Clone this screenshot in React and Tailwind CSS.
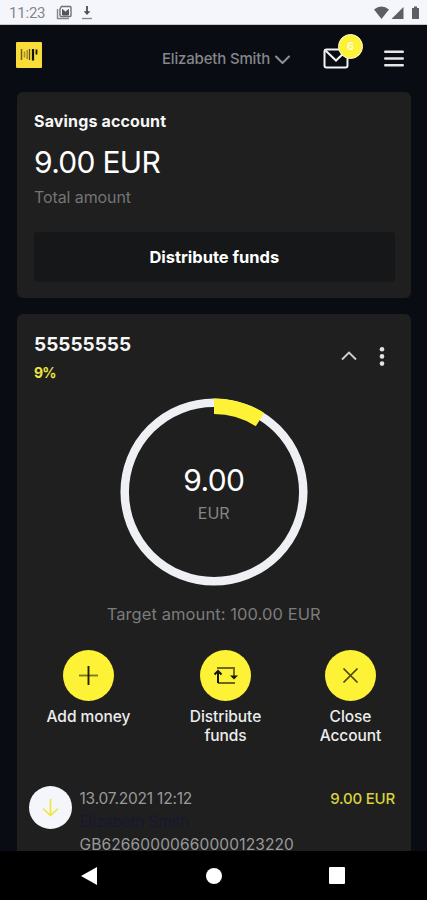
function StatusBar() {
  return (
    <div className="flex h-[25px] shrink-0 items-center border-b border-[#c9cace] bg-[#f4f6fc] pl-[9px] pr-[7px] text-[#85868a]">
      <span className="mt-[2px] w-[47px] font-[Roboto] text-[15px] leading-[25px] tracking-[-0.2px] whitespace-nowrap">11:23</span>
      <svg className="mt-px" width="17" height="15" viewBox="0 0 17 15" fill="none">
        <path d="M1.5 4v9.5h11.5" stroke="#85868a" strokeWidth="1.4" />
        <path d="M5.5 1.5h8.5q1 0 1 1v8q0 1-1 1h-8.5q-1.500 0-1.500-1v-6.500z" stroke="#707175" strokeWidth="1.4" />
        <path d="M6.500 10V4.500L9.500 7l3-2.500V10z" fill="#55565a" stroke="#55565a" />
      </svg>
      <svg className="ml-[8px] mt-px" width="12" height="15" viewBox="0 0 12 15" fill="none">
        <path d="M6 1v8" stroke="#4b4c50" strokeWidth="1.800" />
        <path d="M2.700 6.300h6.600L6 10z" fill="#4b4c50" />
        <path d="M1 13.500h10" stroke="#85868a" strokeWidth="1.300" />
      </svg>
      <svg className="ml-auto mt-[2px]" width="46" height="14" viewBox="0 0 46 14" fill="#5d5e62">
        <path d="M0 3.500Q7.500-2.500 15 3.500L7.500 13z" />
        <path d="M29.500 1v12h-12z" />
        <path d="M38 2h2V.5h3V2h2v11h-7z" />
      </svg>
    </div>
  );
}

function Header() {
  return (
    <header className="flex h-[67px] shrink-0 items-start pl-4">
      <svg className="mt-[17px]" width="26" height="26" viewBox="0 0 26 26" fill="none">
        <rect width="26" height="26" rx="1" fill="#f9dc38" />
        <path d="M5.500 7v11" stroke="#6e5d1c" strokeWidth="1.500" />
        <path d="M8.500 9.500v6M11.200 8v9" stroke="#a58c26" strokeWidth="1.500" />
        <path d="M13.500 7v11" stroke="#5c4d18" strokeWidth="1.300" />
        <path d="M17 7v11.500" stroke="#14120c" strokeWidth="2.200" />
        <path d="M20.500 7.500v5" stroke="#14120c" strokeWidth="1.800" />
      </svg>
      <span className="ml-[120px] mt-[22px] w-[113px] text-[15px] font-medium leading-6 tracking-[-0.18px] whitespace-nowrap text-[#858689]">
        Elizabeth Smith
      </span>
      <svg className="mt-[30px]" width="15" height="10" viewBox="0 0 15 10" fill="none" stroke="#909194" strokeWidth="2" strokeLinecap="round" strokeLinejoin="round">
        <path d="M1 1.500l6.500 6.500L14 1.500" />
      </svg>
      <div className="relative ml-[33px] mt-[23px]">
        <svg width="26" height="21" viewBox="0 0 26 21" fill="none" stroke="#f4f4f6" strokeWidth="2">
          <rect x="1.500" y="1.500" width="23" height="18" rx="2" />
          <path d="M2.500 2.500L13 12.500 23.500 2.500" />
        </svg>
        <span className="absolute left-[15px] top-[-14px] flex size-[25px] items-center justify-center rounded-full border border-[#fffce0] bg-[#fdf235] text-[11px] font-semibold text-[#fffef0]">
          6
        </span>
      </div>
      <svg className="ml-[35px] mt-[25px]" width="20" height="17" viewBox="0 0 20 17" stroke="#e6e6e9" strokeWidth="2.400" strokeLinecap="round">
        <path d="M1.200 1.800h17.600M1.200 8.500h17.600M1.200 15.200h17.600" />
      </svg>
    </header>
  );
}

function SavingsCard() {
  return (
    <section className="mr-4 ml-[16.500px] flex h-[206px] shrink-0 flex-col rounded-md bg-[#1f1f1f] pr-[16.500px] pl-[17.500px] pt-[17px]">
      <h2 className="text-[16px] font-bold leading-6 tracking-[0.15px] text-[#f7f7f7]">Savings account</h2>
      <p className="mt-[11px] text-[30px] leading-9 tracking-[-0.7px] text-white">9.00 EUR</p>
      <p className="mt-[5px] text-[16px] leading-6 tracking-[-0.1px] text-[#747474]">Total amount</p>
      <button className="mt-[23px] h-[50px] rounded bg-[#161718] text-[16.500px] font-bold tracking-[-0.02px] text-white">Distribute funds</button>
    </section>
  );
}

function ProgressRing() {
  return (
    <div className="mt-[13px] grid h-[190px] place-items-center">
      <svg className="col-start-1 row-start-1" width="190" height="190" viewBox="0 0 190 190" fill="none">
        <circle cx="95" cy="95" r="89.300" stroke="#eff0f4" strokeWidth="8.500" />
        <path d="M95 9.200A85.800 85.800 0 0 1 140.980 22.560" stroke="#fdf235" strokeWidth="15.600" />
      </svg>
      <div className="col-start-1 row-start-1 text-center">
        <p className="mt-[3px] text-[30px] leading-9 tracking-[-0.6px] text-white">9.00</p>
        <p className="mt-[3px] text-[16px] leading-6 text-[#858585]">EUR</p>
      </div>
    </div>
  );
}

function Action({ label, children }) {
  return (
    <div className="flex w-[90px] flex-col items-center">
      <span className="flex size-[51px] items-center justify-center rounded-full bg-[#fdf235]">{children}</span>
      <span className="mt-[6px] text-center text-[15.500px] font-medium leading-[19px] tracking-[-0.05px] text-[#ededed]">{label}</span>
    </div>
  );
}

function AccountCard() {
  return (
    <section className="mr-4 ml-[16.500px] mt-[16px] flex min-h-0 flex-1 flex-col overflow-hidden rounded-t-md bg-[#1f1f1f]">
      <div className="flex h-[70px] shrink-0 items-start pl-[17.500px] pr-[25px]">
        <div>
          <h2 className="mt-[19px] text-[19px] font-bold leading-6 text-[#f7f7f7]">55555555</h2>
          <p className="mt-[4px] text-[14px] font-bold leading-6 tracking-[-0.8px] text-[#ece442]">9%</p>
        </div>
        <svg className="ml-auto mt-[36px]" width="16" height="11" viewBox="0 0 16 11" fill="none" stroke="#cfcfcf" strokeWidth="1.900">
          <path d="M1 9.500L8 2.500l7 7" />
        </svg>
        <svg className="ml-[21px] mt-[32px]" width="8" height="20" viewBox="0 0 8 20" fill="#e2e2e2">
          <circle cx="4" cy="3.200" r="2.300" />
          <circle cx="4" cy="10.400" r="2.300" />
          <circle cx="4" cy="17.600" r="2.300" />
        </svg>
      </div>
      <ProgressRing />
      <p className="mt-[15px] text-center text-[16.500px] leading-6 tracking-[0.08px] text-[#7c7c7c]">Target amount: 100.00 EUR</p>
      <div className="mt-[24px] flex h-[113px] shrink-0 items-start pl-[27px]">
        <Action label="Add money">
          <svg width="19" height="19" viewBox="0 0 19 19" fill="none">
            <path d="M0 9.500h19" stroke="#807a20" strokeWidth="1.900" />
            <path d="M9.500 0v19" stroke="#22210c" strokeWidth="1.900" />
          </svg>
        </Action>
        <div className="ml-[47px]">
          <Action label="Distribute funds">
            <svg width="26" height="19" viewBox="0 0 26 19" fill="none">
              <path d="M4 2h17v9M22 17H5" stroke="#6d6819" strokeWidth="1.900" />
              <path d="M5 17V6" stroke="#17160a" strokeWidth="2" />
              <path d="M1.500 8.500L5 5l3.500 3.500" stroke="#17160a" strokeWidth="2" />
              <path d="M17 9.500h8l-4 4z" fill="#17160a" />
            </svg>
          </Action>
        </div>
        <div className="ml-[35px]">
          <Action label="Close Account">
            <svg width="17" height="17" viewBox="0 0 17 17" fill="none" stroke="#4a4714" strokeWidth="1.700">
              <path d="M1.500 1.500l14 14M15.500 1.500l-14 14" />
            </svg>
          </Action>
        </div>
      </div>
      <div className="mt-[23px] flex items-start pl-[12px] pr-[16px]">
        <span className="flex size-[43px] shrink-0 items-center justify-center rounded-full bg-[#f5f6fc]">
          <svg className="mt-px" width="17" height="18" viewBox="0 0 17 18" fill="none" stroke="#efe640" strokeWidth="1.700">
            <path d="M8.500 0v16M1 9.500l7.500 7 7.500-7" />
          </svg>
        </span>
        <div className="ml-[8px] mt-px text-[15.500px] leading-[23px] whitespace-nowrap text-[#9a9a9a]">
          <p className="tracking-[-0.2px]">13.07.2021 12:12</p>
          <p className="tracking-[-0.22px] text-[#171830]">Elizabeth Smith</p>
          <p className="mt-[5px] leading-[13px] tracking-[0.14px]">GB62660000660000123220</p>
        </div>
        <span className="ml-auto mt-px text-[15px] font-medium leading-[23px] tracking-[-0.2px] whitespace-nowrap text-[#d8d23c]">9.00 EUR</span>
      </div>
    </section>
  );
}

function NavBar() {
  return (
    <nav className="flex h-[49px] shrink-0 items-center bg-black pl-[81px]">
      <svg width="17" height="18" viewBox="0 0 17 18" fill="#fff">
        <path d="M0 9L16 0v18z" />
      </svg>
      <span className="ml-[108px] size-4 rounded-full bg-white" />
      <span className="ml-[107px] h-[17px] w-4 rounded-[1px] bg-white" />
    </nav>
  );
}

export default function App() {
  return (
    <div className="flex h-[900px] w-[427px] flex-col overflow-hidden bg-[#090c13] font-[Inter,sans-serif]">
      <StatusBar />
      <Header />
      <SavingsCard />
      <AccountCard />
      <NavBar />
    </div>
  );
}
